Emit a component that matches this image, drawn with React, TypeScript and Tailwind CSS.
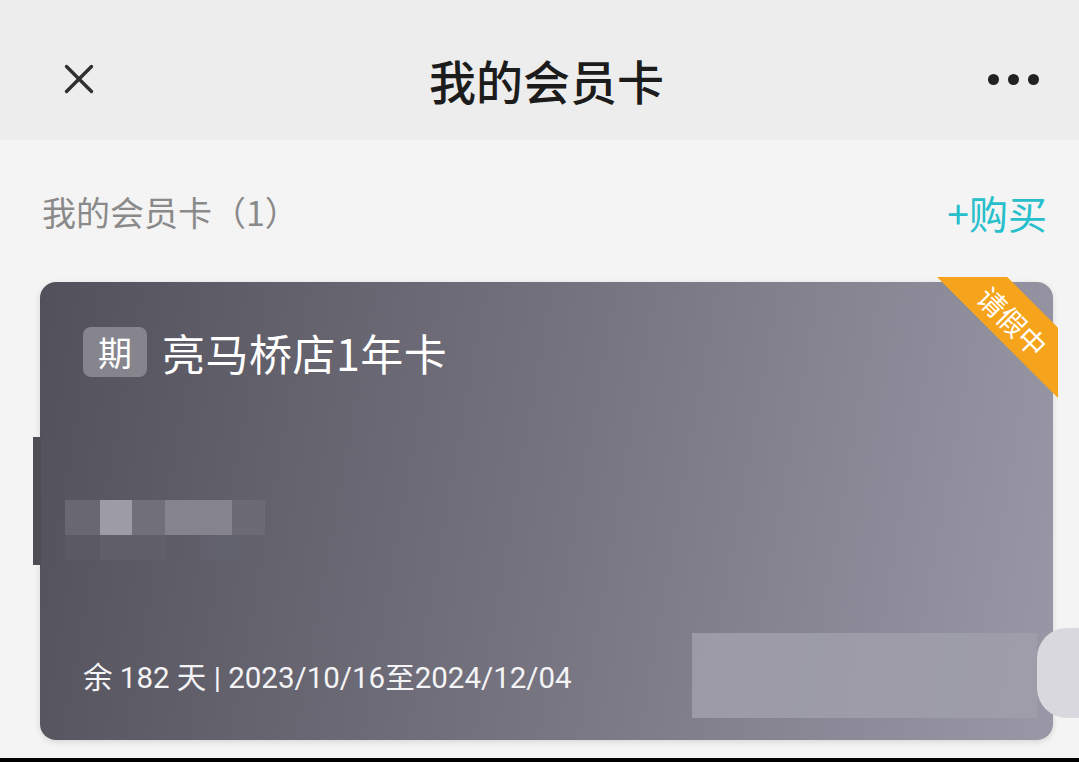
import { X } from 'lucide-react';

const blurTop = [
  { w: 'w-[35px]', c: 'bg-[#696871]' },
  { w: 'w-[32px]', c: 'bg-[#9d9ca4]' },
  { w: 'w-[33px]', c: 'bg-[#717078]' },
  { w: 'w-[67px]', c: 'bg-[#85848c]' },
  { w: 'w-[33px]', c: 'bg-[#6c6b73]' },
];

const blurBottom = [
  { w: 'w-[35px]', c: 'bg-[#5d5c66]' },
  { w: 'w-[65px]', c: 'bg-[#64636c]' },
  { w: 'w-[35px]', c: 'bg-[#5f5e67]' },
  { w: 'w-[40px]', c: 'bg-[#636270]' },
];

function Ribbon() {
  return (
    <>
      <div className="absolute right-[-5px] top-[-5px] w-[121px] h-[121px] bg-[#f6a41c] [clip-path:polygon(0_0,58%_0,100%_42%,100%_100%)]" />
      <div className="absolute left-[923px] top-[24px] w-[100px] h-[30px] rotate-45 flex items-center justify-center text-white text-[28px] leading-none">
        请假中
      </div>
    </>
  );
}

function MemberCard() {
  return (
    <div className="relative ml-[40px] mr-[26px] h-[458px] rounded-[16px] bg-[linear-gradient(100deg,#52515b_0%,#75737f_50%,#9a98a7_100%)] shadow-[0_2px_6px_rgba(0,0,0,0.12)] pl-[43px] pt-[45px] flex flex-col">
      <Ribbon />
      <div className="flex items-center gap-[15px]">
        <div className="w-[64px] h-[50px] rounded-[8px] bg-[#86858e] flex items-center justify-center text-white text-[34px] leading-none">
          期
        </div>
        <div className="text-white text-[43px] leading-none tracking-[0.5px]">亮马桥店1年卡</div>
      </div>

      <div className="mt-[123px] ml-[-18px] flex flex-col">
        <div className="flex h-[35px]">
          {blurTop.map((b, i) => (
            <div key={i} className={`${b.w} ${b.c} h-full`} />
          ))}
        </div>
        <div className="flex h-[25px] opacity-70">
          {blurBottom.map((b, i) => (
            <div key={i} className={`${b.w} ${b.c} h-full`} />
          ))}
        </div>
      </div>

      <div className="mt-[100px] text-[#f4f4f6] text-[29.5px] leading-[36px] font-['Roboto','Noto_Sans_CJK_SC',sans-serif]">
        余 182 天 | 2023/10/16至2024/12/04
      </div>
    </div>
  );
}

export default function App() {
  return (
    <div className="relative w-[1079px] h-[762px] overflow-hidden bg-[#f4f4f4] font-['Noto_Sans_CJK_SC','Noto_Sans',sans-serif] border-b-4 border-black">
      <header className="h-[140px] bg-[#ededed] grid grid-cols-[1fr_auto_1fr] items-center pl-[54px] pr-[40px] pt-[18px]">
        <X className="w-[50px] h-[50px] text-[#2f2f2f]" strokeWidth={1.6} />
        <h1 className="text-[47px] font-medium text-[#1c1c1c] leading-none">我的会员卡</h1>
        <div className="flex items-center gap-[9px] justify-self-end">
          <span className="w-[11px] h-[11px] rounded-full bg-[#222]" />
          <span className="w-[11px] h-[11px] rounded-full bg-[#222]" />
          <span className="w-[11px] h-[11px] rounded-full bg-[#222]" />
        </div>
      </header>

      <div className="h-[142px] flex items-start justify-between pl-[42px] pr-[32px] pt-[50px]">
        <span className="text-[34px] text-[#8a8a8a] leading-[44px]">我的会员卡（1）</span>
        <span className="text-[39px] text-[#26bfcb] leading-[44px]">+购买</span>
      </div>

      <MemberCard />

      {/* privacy masks */}
      <div className="absolute left-[33px] top-[437px] w-[8px] h-[128px] bg-[#4e4d56]" />
      <div className="absolute left-[692px] top-[633px] w-[345px] h-[85px] bg-[#9f9daa] opacity-90" />
      <div className="absolute left-[1037px] top-[628px] w-[60px] h-[90px] rounded-l-[30px] bg-[#d9d8de]" />
    </div>
  );
}
